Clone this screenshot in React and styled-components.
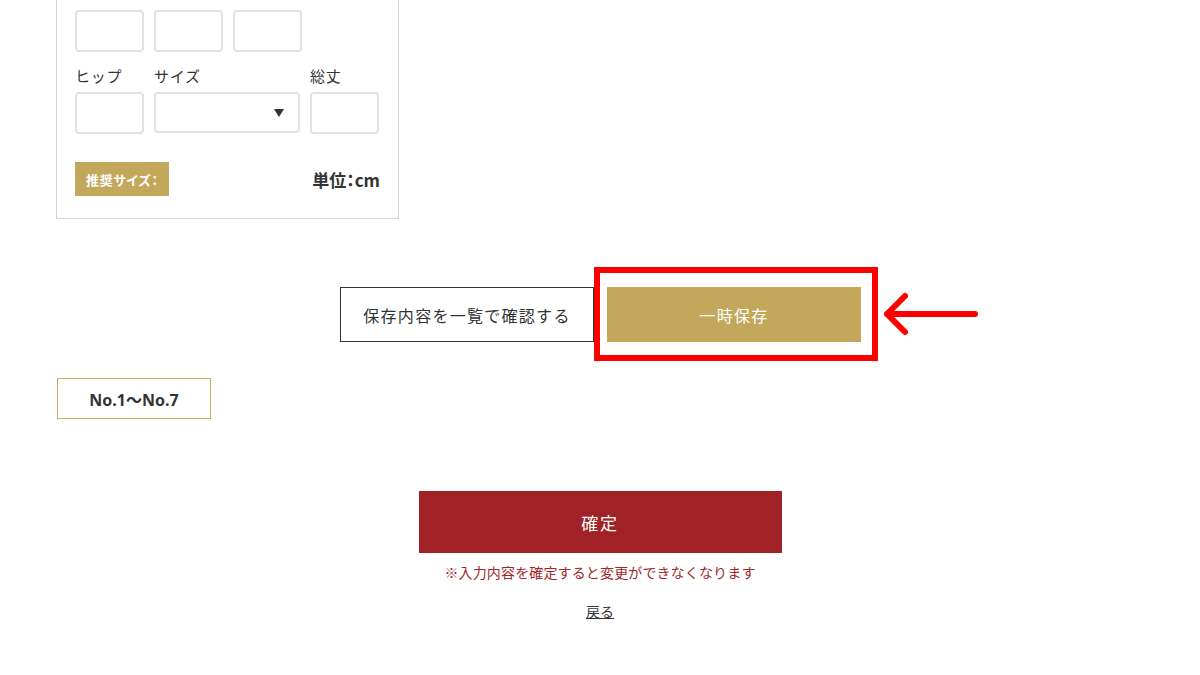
import React from 'react'
import styled, { createGlobalStyle } from 'styled-components'

const GlobalStyle = createGlobalStyle`
  body {
    margin: 0;
    background: #fff;
    font-family: "Noto Sans CJK JP", "Noto Sans", sans-serif;
    color: #333;
  }
`

const Page = styled.div`
  width: 1200px;
  height: 675px;
  overflow: hidden;
  display: flex;
  flex-direction: column;
`

const Panel = styled.div`
  margin-left: 56px;
  width: 343px;
  box-sizing: border-box;
  border: 1px solid #d4d4d4;
  border-top: none;
  padding: 10px 18px 22px 18px;
`

const Row = styled.div`
  display: flex;
  gap: 10px;
`

const Field = styled.div`
  display: flex;
  flex-direction: column;
`

const Label = styled.div`
  font-size: 15px;
  line-height: 20px;
  height: 20px;
  margin: 14px 0 6px;
  color: #333;
  letter-spacing: 0.05em;
`

const Input = styled.div`
  width: ${p => p.w || 69}px;
  height: ${p => p.h || 42}px;
  box-sizing: border-box;
  border: 2px solid #e2e2e2;
  border-radius: 4px;
  background: #fff;
`

const Select = styled(Input)`
  display: flex;
  align-items: center;
  justify-content: flex-end;
  padding-right: 14px;
`

const Caret = styled.span`
  width: 0;
  height: 0;
  border-left: 5px solid transparent;
  border-right: 5px solid transparent;
  border-top: 8px solid #333;
`

const Footer = styled.div`
  margin-top: 28px;
  display: flex;
  align-items: center;
  justify-content: space-between;
`

const Badge = styled.div`
  width: 94px;
  height: 34px;
  background: #c3a75a;
  color: #fff;
  font-size: 13px;
  font-weight: 700;
  display: flex;
  align-items: center;
  padding-left: 11px;
  box-sizing: border-box;
  letter-spacing: 0.05em;
  font-feature-settings: "palt";
`

const Unit = styled.div`
  font-size: 17px;
  font-weight: 700;
  color: #333;
  font-feature-settings: "palt";
`

const ButtonRow = styled.div`
  margin-top: 68px;
  display: flex;
  justify-content: center;
  gap: 13px;
  padding-left: 1px;
`

const OutlineButton = styled.div`
  width: 254px;
  height: 55px;
  box-sizing: border-box;
  border: 1px solid #333;
  display: flex;
  align-items: center;
  justify-content: center;
  font-size: 16px;
  letter-spacing: 0.08em;
  color: #333;
`

const GoldWrap = styled.div`
  position: relative;
`

const GoldButton = styled.div`
  width: 254px;
  height: 55px;
  background: #c3a75a;
  color: #fff;
  display: flex;
  align-items: center;
  justify-content: center;
  font-size: 16px;
  letter-spacing: 0.08em;
`

const Highlight = styled.div`
  position: absolute;
  left: -13px;
  top: -20px;
  right: -17px;
  bottom: -19px;
  border: 6px solid #ff0000;
`

const Arrow = styled.svg`
  position: absolute;
  left: 274px;
  top: 4px;
`

const RangeBox = styled.div`
  margin: 36px 0 0 57px;
  width: 154px;
  height: 41px;
  box-sizing: border-box;
  border: 1px solid #c8ae62;
  display: flex;
  align-items: center;
  justify-content: center;
  font-size: 16px;
  font-weight: 700;
  color: #333;
  font-family: "Noto Sans", "Noto Sans CJK JP", sans-serif;
`

const Confirm = styled.div`
  margin: 72px auto 0;
  width: 363px;
  height: 62px;
  background: #a02226;
  color: #fff;
  display: flex;
  align-items: center;
  justify-content: center;
  font-size: 17px;
  letter-spacing: 0.1em;
`

const Note = styled.div`
  margin-top: 9px;
  text-align: center;
  font-size: 14px;
  color: #a3262a;
  letter-spacing: 0.01em;
`

const Back = styled.a`
  display: block;
  margin: 19px auto 0;
  width: fit-content;
  font-size: 14px;
  color: #333;
  text-decoration: underline;
`

const App = () => (
  <Page>
    <GlobalStyle />
    <Panel>
      <Row>
        <Input />
        <Input />
        <Input />
      </Row>
      <Row>
        <Field>
          <Label>ヒップ</Label>
          <Input />
        </Field>
        <Field>
          <Label>サイズ</Label>
          <Select w={146} h={41}>
            <Caret />
          </Select>
        </Field>
        <Field>
          <Label>総丈</Label>
          <Input />
        </Field>
      </Row>
      <Footer>
        <Badge>推奨サイズ：</Badge>
        <Unit>単位：cm</Unit>
      </Footer>
    </Panel>

    <ButtonRow>
      <OutlineButton>保存内容を一覧で確認する</OutlineButton>
      <GoldWrap>
        <GoldButton>一時保存</GoldButton>
        <Highlight />
        <Arrow width="98" height="46" viewBox="0 0 98 46">
          <path
            d="M6 23 H94 M6 23 L24 5 M6 23 L24 41"
            stroke="#ff0000"
            strokeWidth="6"
            strokeLinecap="round"
            strokeLinejoin="round"
            fill="none"
          />
        </Arrow>
      </GoldWrap>
    </ButtonRow>

    <RangeBox>No.1〜No.7</RangeBox>

    <Confirm>確定</Confirm>
    <Note>※入力内容を確定すると変更ができなくなります</Note>
    <Back>戻る</Back>
  </Page>
)

export default App
